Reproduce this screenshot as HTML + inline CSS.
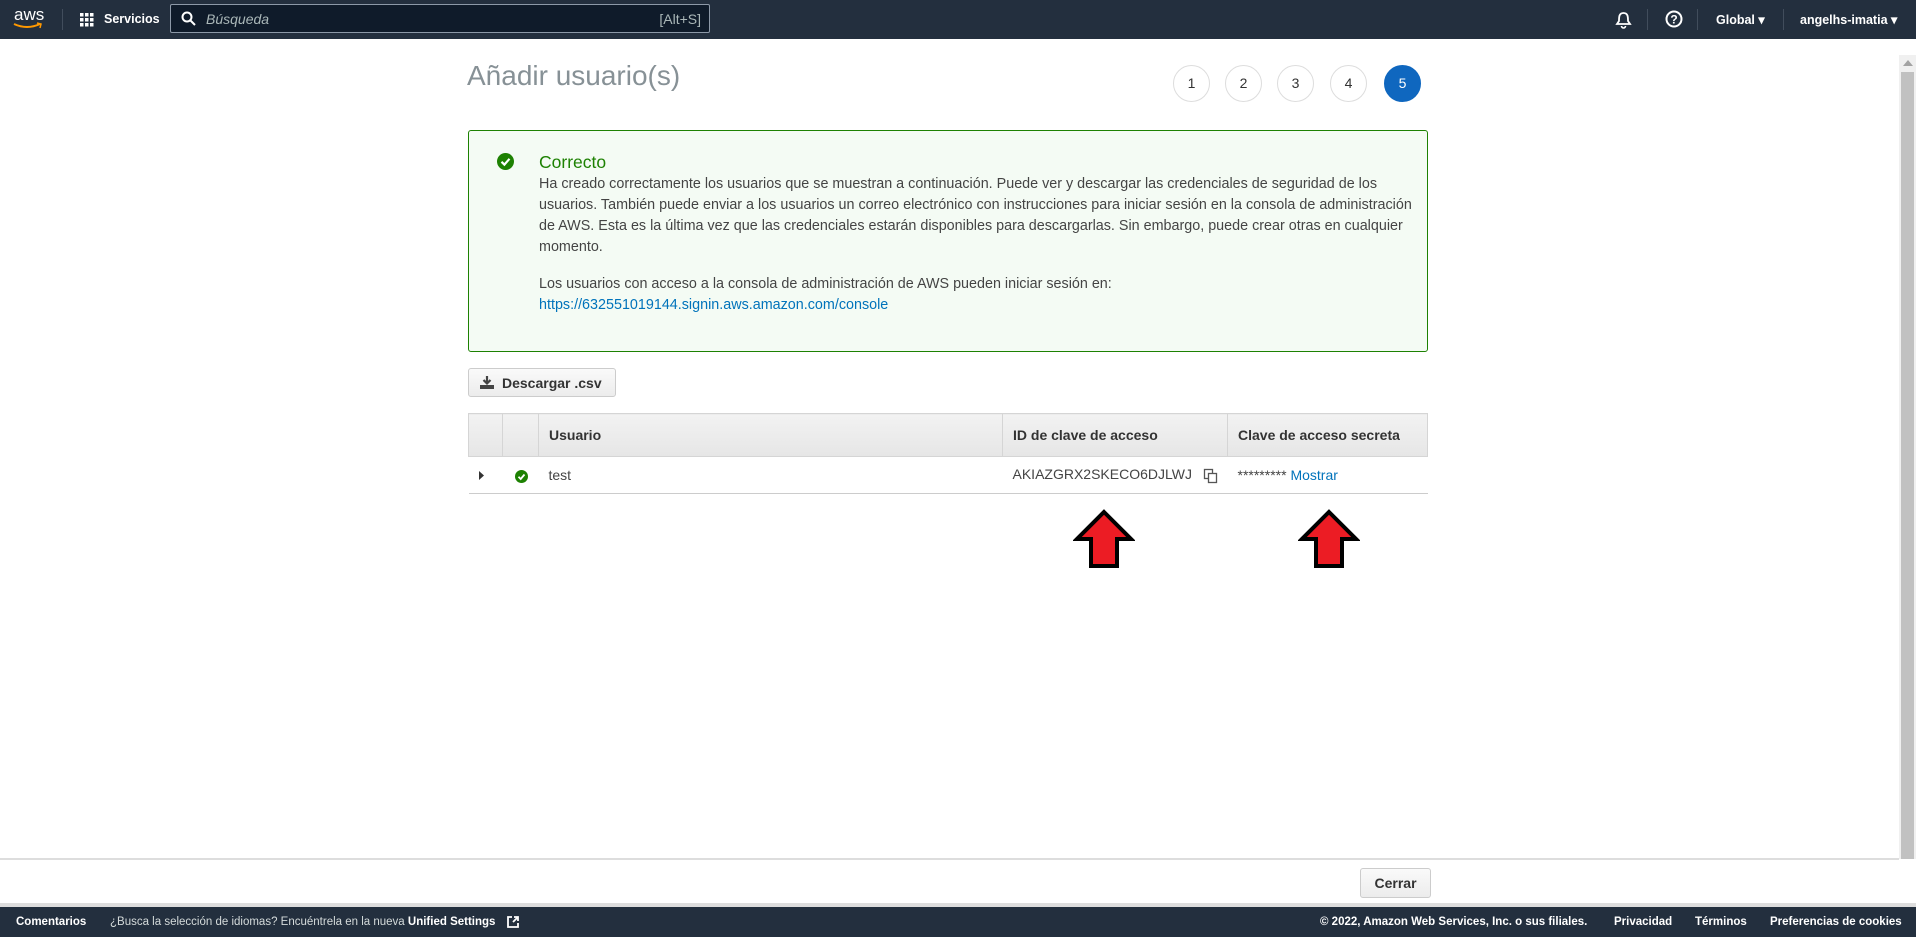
<!DOCTYPE html>
<html><head><meta charset="utf-8">
<style>
*{box-sizing:border-box;margin:0;padding:0}
body{width:1916px;height:937px;overflow:hidden;background:#fff;font-family:"Liberation Sans",Arial,sans-serif;position:relative;color:#444}
.nav{position:absolute;left:0;top:0;width:1916px;height:39px;background:#232f3e;color:#fff;font-size:12.5px;font-weight:bold}
.abs{position:absolute}
.search{position:absolute;left:170px;top:4px;width:540px;height:29px;background:#0f1b2a;border:1px solid #8d99a8;border-radius:2px}
.steps div{position:absolute;top:65px;width:37px;height:37px;border-radius:50%;border:1px solid #ddd;text-align:center;line-height:35px;font-size:14px;color:#333;background:#fff}
.box{position:absolute;left:468px;top:130px;width:960px;height:222px;border:1px solid #1d8102;border-radius:3px;background:#f4fbf4}
.txt{position:absolute;left:70px;font-size:14.35px;color:#444;white-space:nowrap;line-height:21px}
table{position:absolute;left:468px;top:413px;width:960px;border-collapse:collapse;font-size:14px}
th{background:linear-gradient(#f2f2f2,#e6e6e6);height:43px;text-align:left;font-weight:bold;color:#333;border:1px solid #d5d5d5;padding-left:10px}
td{height:37px;border-bottom:1px solid #ccc;padding-left:10px;color:#444}
.foot{position:absolute;left:0;top:907px;width:1916px;height:30px;background:#232f3e;color:#fff;font-size:11.5px}
</style></head><body>
<div class="nav">
  <div class="abs" style="left:14px;top:5px;font-size:17px;font-weight:normal;letter-spacing:0">aws</div>
  <svg class="abs" style="left:13px;top:22px" width="30" height="8"><path d="M1 2 Q14 8 27 2" stroke="#ff9900" stroke-width="2" fill="none"/><path d="M24 1 L28 2 L27 6" stroke="#ff9900" stroke-width="1.5" fill="none"/></svg>
  <div class="abs" style="left:62px;top:9px;width:1px;height:21px;background:#414d5c"></div>
  <svg class="abs" style="left:80px;top:13px" width="14" height="14" fill="#fff"><rect x="0" y="0" width="3.5" height="3.5"/><rect x="5" y="0" width="3.5" height="3.5"/><rect x="10" y="0" width="3.5" height="3.5"/><rect x="0" y="5" width="3.5" height="3.5"/><rect x="5" y="5" width="3.5" height="3.5"/><rect x="10" y="5" width="3.5" height="3.5"/><rect x="0" y="10" width="3.5" height="3.5"/><rect x="5" y="10" width="3.5" height="3.5"/><rect x="10" y="10" width="3.5" height="3.5"/></svg>
  <div class="abs" style="left:104px;top:12px">Servicios</div>
  <div class="search">
    <svg class="abs" style="left:10px;top:6px" width="15" height="15"><circle cx="6" cy="6" r="4.5" stroke="#fff" stroke-width="2" fill="none"/><path d="M9.5 9.5 L14 14" stroke="#fff" stroke-width="2"/></svg>
    <div class="abs" style="left:35px;top:6px;font-style:italic;font-weight:normal;color:#aab7b8;font-size:14px">Búsqueda</div>
    <div class="abs" style="right:8px;top:6px;font-weight:normal;color:#aab7b8;font-size:14px">[Alt+S]</div>
  </div>
  <svg class="abs" style="left:1615px;top:11px" width="17" height="18"><path d="M8.5 2 C4 2 4 6 4 10 L2 13 H15 L13 10 C13 6 13 2 8.5 2Z" stroke="#fff" stroke-width="1.8" fill="none"/><path d="M6.5 15 A2 2 0 0 0 10.5 15" stroke="#fff" stroke-width="1.6" fill="none"/></svg>
  <div class="abs" style="left:1647px;top:9px;width:1px;height:21px;background:#414d5c"></div>
  <svg class="abs" style="left:1665px;top:10px" width="18" height="18"><circle cx="9" cy="9" r="7.5" stroke="#fff" stroke-width="2" fill="none"/><text x="9" y="13.5" text-anchor="middle" fill="#fff" font-size="12" font-weight="bold" font-family="Liberation Sans">?</text></svg>
  <div class="abs" style="left:1697px;top:9px;width:1px;height:21px;background:#414d5c"></div>
  <div class="abs" style="left:1716px;top:12px">Global ▾</div>
  <div class="abs" style="left:1783px;top:9px;width:1px;height:21px;background:#414d5c"></div>
  <div class="abs" style="left:1800px;top:12px">angelhs-imatia ▾</div>
</div>

<div class="abs" style="left:1899px;top:55px;width:17px;height:804px;background:#f0f0f0"></div>
<svg class="abs" style="left:1903px;top:60px" width="10" height="6"><path d="M0 6 L5 0 L10 6Z" fill="#a3a3a3"/></svg>
<div class="abs" style="left:1901px;top:72px;width:13px;height:787px;background:#c1c1c1"></div>

<div class="abs" style="left:467px;top:60px;font-size:28px;color:#879196">Añadir usuario(s)</div>
<div class="steps">
  <div style="left:1173px">1</div><div style="left:1225px">2</div><div style="left:1277px">3</div><div style="left:1330px">4</div>
  <div style="left:1384px;background:#0f67bf;border-color:#0f67bf;color:#fff">5</div>
</div>

<div class="box">
  <svg class="abs" style="left:28px;top:22px" width="17" height="17"><circle cx="8.5" cy="8.5" r="8.5" fill="#1d8102"/><path d="M4.5 8.8 L7.4 11.6 L12.5 5.8" stroke="#fff" stroke-width="2.2" fill="none"/></svg>
  <div class="txt" style="top:21px;font-size:17.5px;color:#1d8102">Correcto</div>
  <div class="txt" style="top:43px">Ha creado correctamente los usuarios que se muestran a continuación. Puede ver y descargar las credenciales de seguridad de los<br>usuarios. También puede enviar a los usuarios un correo electrónico con instrucciones para iniciar sesión en la consola de administración<br>de AWS. Esta es la última vez que las credenciales estarán disponibles para descargarlas. Sin embargo, puede crear otras en cualquier<br>momento.</div>
  <div class="txt" style="top:143px">Los usuarios con acceso a la consola de administración de AWS pueden iniciar sesión en:<br><span style="color:#0073bb">https://632551019144.signin.aws.amazon.com/console</span></div>
</div>

<div class="abs" style="left:468px;top:368px;width:148px;height:29px;border:1px solid #ccc;border-radius:3px;background:linear-gradient(#fafafa,#ececec);font-size:14px;font-weight:bold;color:#333">
  <svg class="abs" style="left:11px;top:7px" width="14" height="13"><path d="M7 0 V7 M3.5 4 L7 7.5 L10.5 4" stroke="#444" stroke-width="2.2" fill="none"/><rect x="0" y="9" width="14" height="4" fill="#444"/></svg>
  <div class="abs" style="left:33px;top:6px">Descargar .csv</div>
</div>

<table>
<tr><th style="width:34px"></th><th style="width:36px"></th><th style="width:464px">Usuario</th><th style="width:225px">ID de clave de acceso</th><th>Clave de acceso secreta</th></tr>
<tr><td><svg width="6" height="9"><path d="M0 0 L5 4.5 L0 9Z" fill="#333"/></svg></td>
<td style="padding-left:12px"><svg width="13" height="13" style="vertical-align:middle"><circle cx="6.5" cy="6.5" r="6.5" fill="#1d8102"/><path d="M3.5 6.8 L5.7 9 L9.5 4.5" stroke="#fff" stroke-width="1.8" fill="none"/></svg></td>
<td>test</td>
<td>AKIAZGRX2SKECO6DJLWJ <svg width="16" height="16" style="vertical-align:middle;margin-left:7px"><rect x="1.5" y="1.5" width="8" height="9" fill="none" stroke="#555" stroke-width="1.3"/><rect x="5.5" y="5.5" width="8" height="9" fill="#fff" stroke="#555" stroke-width="1.3"/></svg></td>
<td>********* <span style="color:#0073bb">Mostrar</span></td></tr>
</table>

<svg class="abs" style="left:1073px;top:509px" width="62" height="60"><path d="M31 3 L58 30 H44 V57 H18 V30 H4Z" fill="#ec1c24" stroke="#000" stroke-width="4"/></svg>
<svg class="abs" style="left:1298px;top:509px" width="62" height="60"><path d="M31 3 L58 30 H44 V57 H18 V30 H4Z" fill="#ec1c24" stroke="#000" stroke-width="4"/></svg>

<div class="abs" style="left:0;top:858px;width:1899px;height:2px;background:#ddd"></div>
<div class="abs" style="left:1360px;top:868px;width:71px;height:30px;border:1px solid #ccc;border-radius:3px;background:linear-gradient(#fafafa,#ececec);font-size:14px;font-weight:bold;color:#333;text-align:center;line-height:28px">Cerrar</div>
<div class="abs" style="left:0;top:903px;width:1916px;height:4px;background:#ddd"></div>

<div class="foot">
  <div class="abs" style="left:16px;top:9px;font-weight:bold">Comentarios</div>
  <div class="abs" style="left:110px;top:9px;color:#d5dbdb">¿Busca la selección de idiomas? Encuéntrela en la nueva <b style="color:#fff">Unified Settings</b></div>
  <svg class="abs" style="left:506px;top:8px" width="14" height="14"><path d="M6 2 H2 V12 H12 V8" stroke="#fff" stroke-width="1.8" fill="none"/><path d="M7 7 L12 2 M8 2 H12 V6" stroke="#fff" stroke-width="1.8" fill="none"/></svg>
  <div class="abs" style="left:1320px;top:9px;font-weight:bold">© 2022, Amazon Web Services, Inc. o sus filiales.</div>
  <div class="abs" style="left:1614px;top:9px;font-weight:bold">Privacidad</div>
  <div class="abs" style="left:1695px;top:9px;font-weight:bold">Términos</div>
  <div class="abs" style="left:1770px;top:9px;font-weight:bold">Preferencias de cookies</div>
</div>
</body></html>
